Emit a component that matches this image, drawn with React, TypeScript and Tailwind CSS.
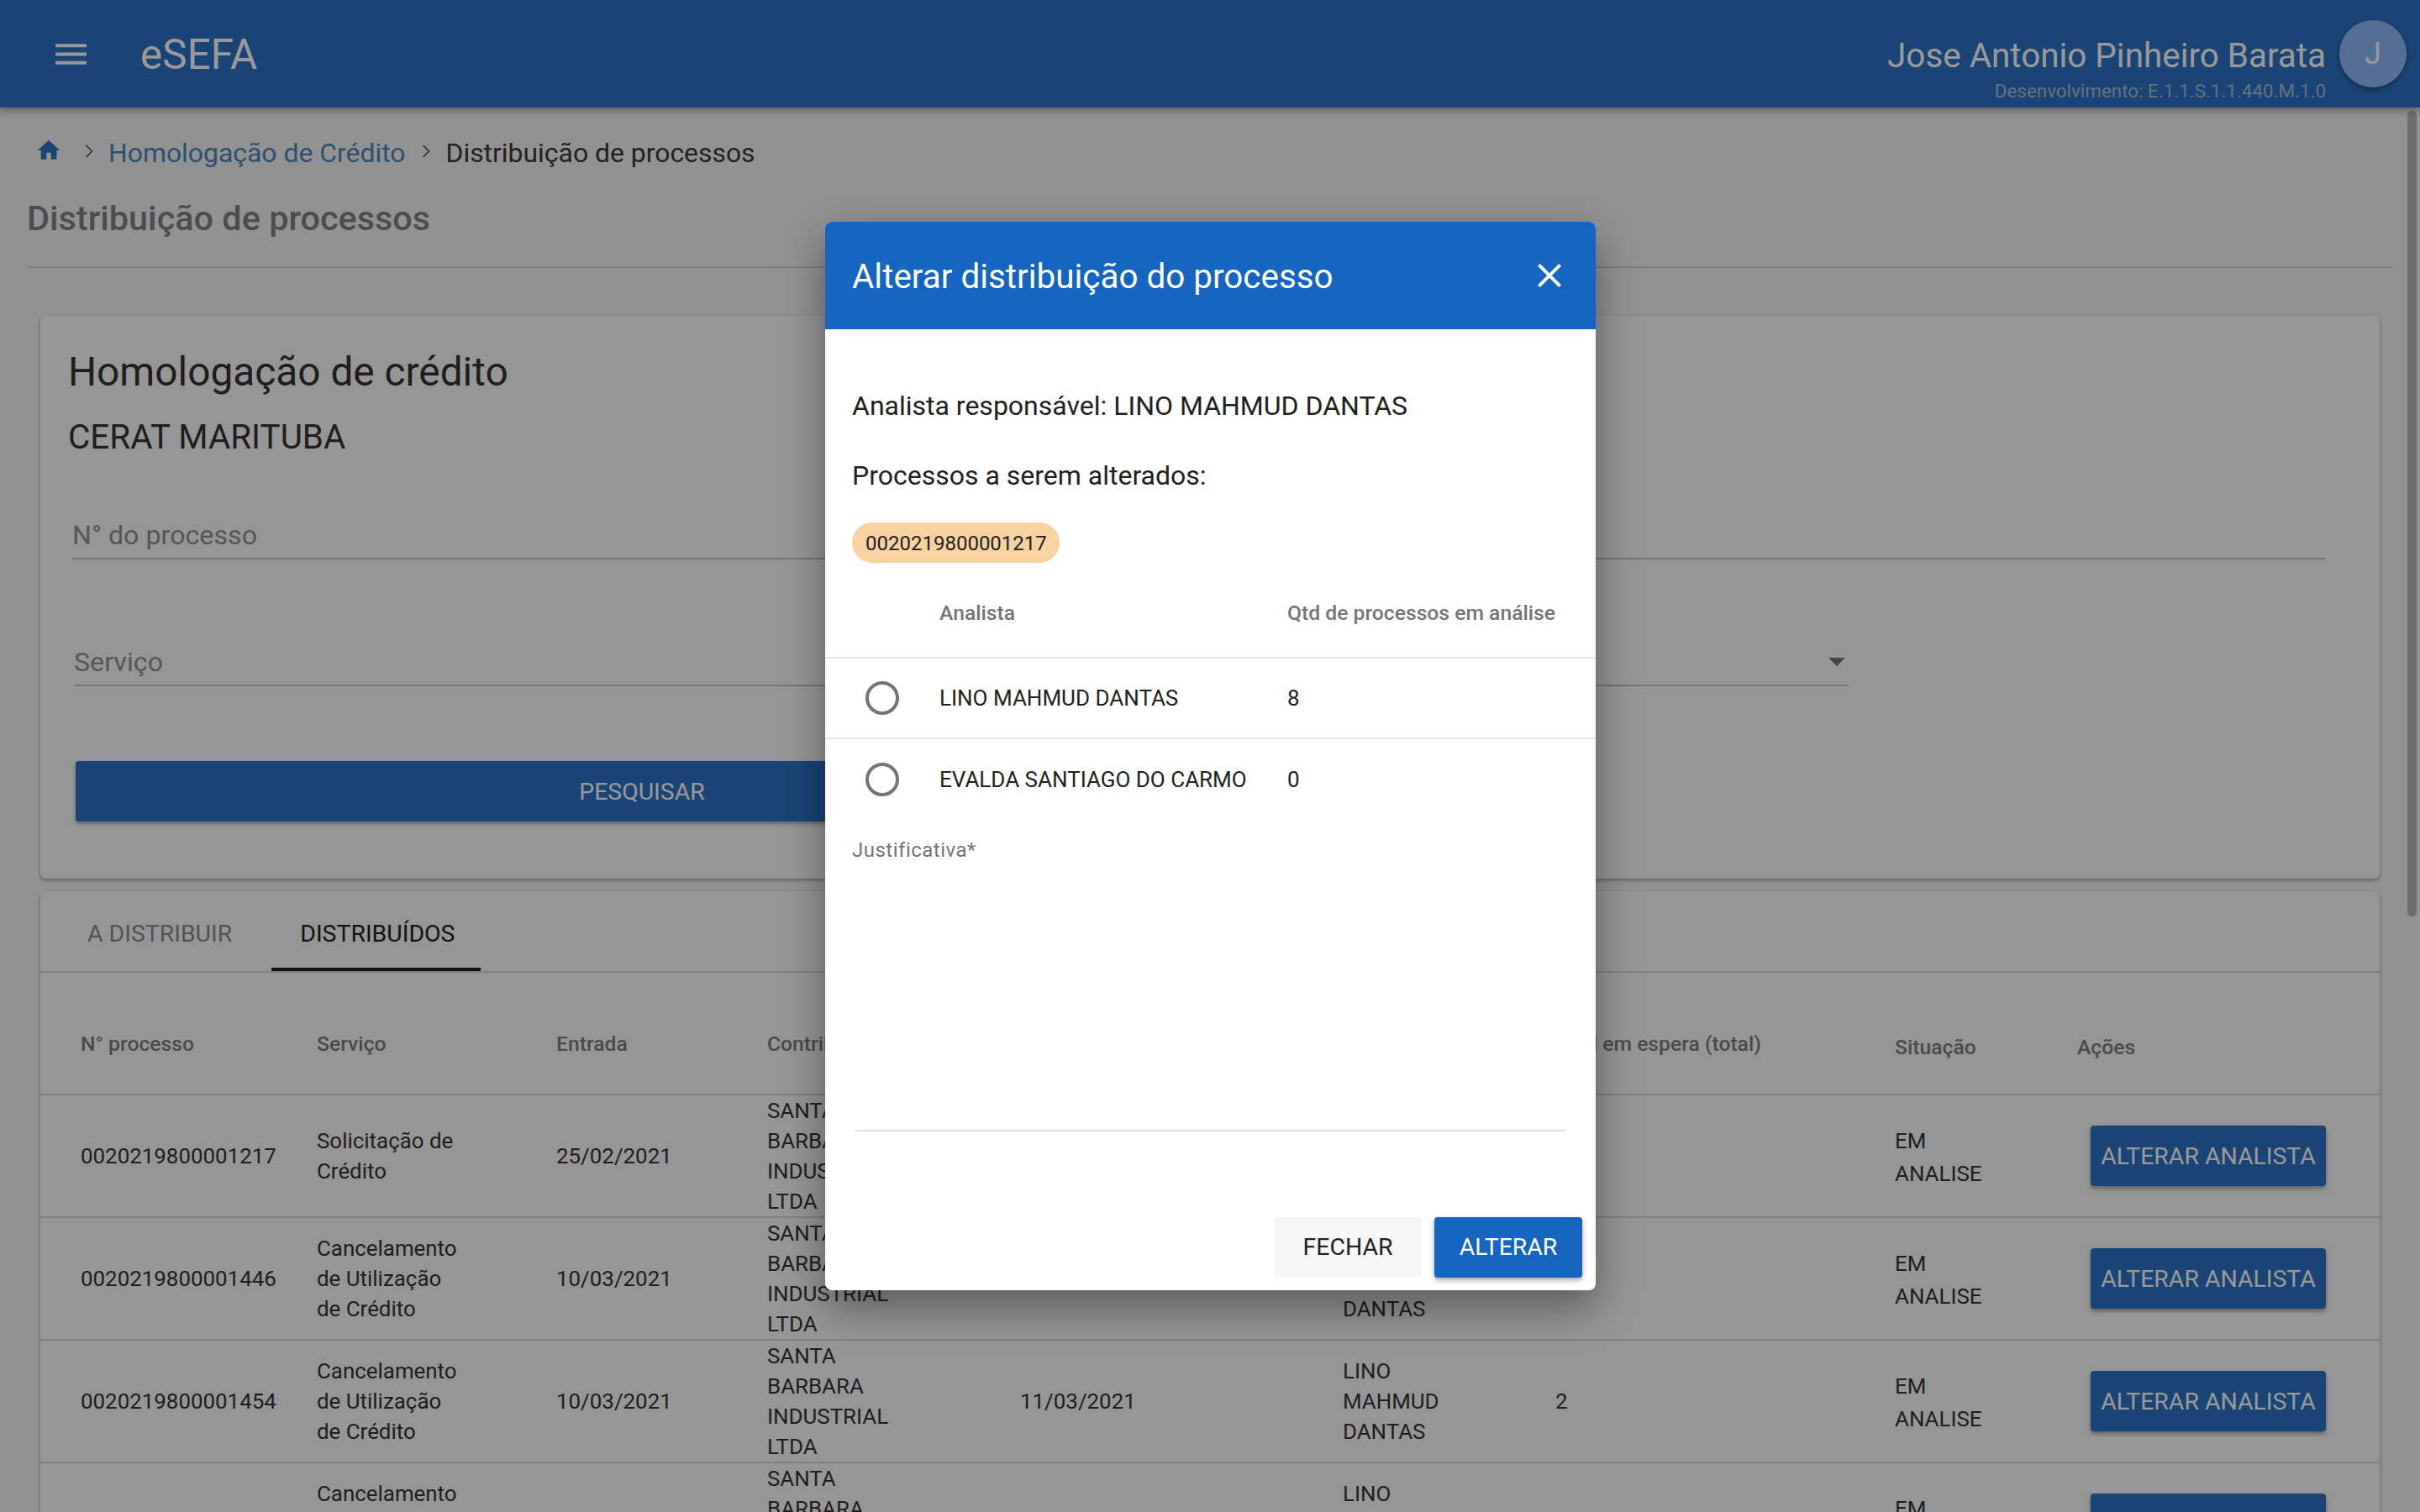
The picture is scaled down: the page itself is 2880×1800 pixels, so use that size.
import React from "react";

const rows = [
  { num: "0020219800001217", service: "Solicitação de Crédito", entrada: "25/02/2021", dist: "26/02/2021", waiting: "1" },
  { num: "0020219800001446", service: "Cancelamento de Utilização de Crédito", entrada: "10/03/2021", dist: "11/03/2021", waiting: "2" },
  { num: "0020219800001454", service: "Cancelamento de Utilização de Crédito", entrada: "10/03/2021", dist: "11/03/2021", waiting: "2" },
  { num: "0020219800001462", service: "Cancelamento de Utilização de Crédito", entrada: "10/03/2021", dist: "11/03/2021", waiting: "2" },
];

const gridCols = "grid grid-cols-[48px_281px_285px_251px_301px_384px_253px_404px_217px_1fr]";

const Chevron = () => (
  <svg viewBox="0 0 10 16" className="w-[10px] h-[16px] mb-[6px]" fill="none" stroke="#4a4a4a" strokeWidth="1.6">
    <path d="M1.5 1l7 7-7 7" />
  </svg>
);

const AnalystRow = ({ name, qty, line }: { name: string; qty: string; line?: boolean }) => (
  <div className={`grid grid-cols-[136px_414px_1fr] items-center h-[96px] text-[26px] text-[#212121] ${line ? "border-b-2 border-[#e6e6e6]" : ""}`}>
    <div className="pl-[48px]">
      <div className="w-[40px] h-[40px] rounded-full border-[4px] border-[#757575]" />
    </div>
    <div>{name}</div>
    <div>{qty}</div>
  </div>
);

export default function App() {
  return (
    <div className="relative w-[2880px] h-[1800px] overflow-hidden bg-[#f3f3f3] font-['Roboto',sans-serif]">
      <header className="relative z-10 flex items-center h-[128px] pl-[60px] pr-[16px] bg-[#2b72c4] text-white shadow-[0_4px_9px_rgba(0,0,0,0.35)]">
        <svg viewBox="0 0 24 24" className="w-[49px] h-[49px]" fill="currentColor">
          <path d="M3 18h18v-2H3v2zm0-5h18v-2H3v2zm0-7v2h18V6H3z" />
        </svg>
        <div className="ml-[58px] pt-[2px] text-[49.5px]">eSEFA</div>
        <div className="ml-auto flex flex-col items-end pt-[36px]">
          <div className="text-[40.4px] leading-[48px]">Jose Antonio Pinheiro Barata</div>
          <div className="text-[22.4px] leading-[26px] mt-[4px] text-[#a8bcd6]">Desenvolvimento: E.1.1.S.1.1.440.M.1.0</div>
        </div>
        <div className="ml-[16px] flex items-center justify-center w-[80px] h-[80px] rounded-full bg-[#8cb7fa] text-[36px] shadow-[0_3px_6px_rgba(0,0,0,0.35)]">
          J
        </div>
      </header>

      <main>
        <nav className="flex items-center h-[64px] mt-[23px] pl-[42px] text-[31.9px] leading-none">
          <svg viewBox="0 0 24 24" className="w-[32px] h-[32px] mb-[8px]" fill="#2b72c4">
            <path d="M10 20v-6h4v6h5v-8h3L12 3 2 12h3v8z" />
          </svg>
          <div className="ml-[27px]"><Chevron /></div>
          <span className="ml-[18px] text-[#4d86b8]">Homologação de Crédito</span>
          <div className="ml-[20px]"><Chevron /></div>
          <span className="ml-[18px] text-[#383838]">Distribuição de processos</span>
        </nav>

        <h1 className="mt-[15px] ml-[32px] h-[60px] flex items-center text-[41.4px] font-medium text-[#808080]">Distribuição de processos</h1>
        <div className="mt-[27px] ml-[32px] w-[2816px] h-[2px] bg-[#d0d0d0]" />

        <section className="relative mt-[57px] mx-[48px] h-[670px] rounded-[6px] bg-[#fafafa] shadow-[0_2px_4px_rgba(0,0,0,0.35)] pt-[38px]">
          <h2 className="ml-[33px] h-[60px] flex items-center text-[47.8px] text-[#333]">Homologação de crédito</h2>
          <div className="ml-[33px] mt-[22px] h-[50px] flex items-center text-[40.4px] text-[#333]">CERAT MARITUBA</div>
          <div className="mt-[71px] ml-[38px] w-[2682px] h-[49px] border-b-2 border-[#c4c4c4] text-[32.2px] leading-[40px] text-[#8f8f8f]">N° do processo</div>
          <div className="relative mt-[102px] ml-[40px] w-[2112px] h-[49px] border-b-2 border-[#c4c4c4] text-[32.2px] leading-[40px] text-[#8f8f8f]">
            Serviço
            <svg viewBox="0 0 24 24" className="absolute right-[-10px] top-[-5px] w-[48px] h-[48px]" fill="#757575">
              <path d="M7 10l5 5 5-5z" />
            </svg>
          </div>
          <button className="block mt-[89px] ml-[42px] w-[1348px] h-[72px] pt-[2px] rounded-[4px] bg-[#2b72c4] text-white text-[28.4px] shadow-[0_3px_5px_rgba(0,0,0,0.3)]">PESQUISAR</button>
        </section>

        <section className="mt-[15px] mx-[48px] rounded-[6px] bg-[#fafafa] shadow-[0_2px_4px_rgba(0,0,0,0.35)]">
          <div className="flex h-[97px] pl-[24px] gap-[15px] border-b-2 border-[#d6d6d6] text-[28.4px]">
            <div className="flex items-center px-[32px] pt-[8px] text-[#8a8a8a]">A DISTRIBUIR</div>
            <div className="flex items-center pl-[34px] pr-[31px] pt-[12px] text-[#212121] border-b-[4px] border-[#212121] h-[95px]">DISTRIBUÍDOS</div>
          </div>

          <div className={`${gridCols} items-center h-[146px] pt-[26px] border-b-2 border-[#d6d6d6] text-[24.7px] font-medium text-[#7c7c7c]`}>
            <div />
            <div>N° processo</div>
            <div>Serviço</div>
            <div>Entrada</div>
            <div>Contribuinte</div>
            <div>Distribuição</div>
            <div>Analista</div>
            <div className="ml-[11px]">Qtd em espera (total)</div>
            <div className="mt-[8px]">Situação</div>
            <div className="mt-[8px]">Ações</div>
          </div>

          {rows.map((r) => (
            <div key={r.num} className={`${gridCols} items-center h-[146px] border-b-2 border-[#d6d6d6] text-[25.9px] leading-[36px] text-[#333]`}>
              <div />
              <div>{r.num}</div>
              <div className="w-[175px]">{r.service}</div>
              <div>{r.entrada}</div>
              <div className="w-[160px]">SANTA BARBARA INDUSTRIAL LTDA</div>
              <div>{r.dist}</div>
              <div className="w-[130px]">LINO MAHMUD DANTAS</div>
              <div>{r.waiting}</div>
              <div className="w-[120px] mt-[4px] leading-[39px]">EM ANALISE</div>
              <div className="pl-[16px]">
                <button className="w-[280px] h-[72px] pt-[1px] rounded-[4px] bg-[#2b72c4] text-white text-[28.4px] shadow-[0_3px_5px_rgba(0,0,0,0.35)]">ALTERAR ANALISTA</button>
              </div>
            </div>
          ))}
        </section>
      </main>

      <div className="absolute right-[4px] top-[132px] w-[11px] h-[959px] rounded-full bg-[#b8b8b8]" />

      <div className="absolute inset-0 z-20 flex items-center justify-center bg-black/40">
        <div className="w-[917px] ml-[1px] h-[1272px] rounded-[8px] overflow-hidden bg-white shadow-[0_20px_50px_rgba(0,0,0,0.4)]">
          <div className="flex items-center justify-between h-[128px] pl-[32px] pr-[31px] bg-[#1565c0] text-white">
            <div className="pt-[5px] text-[40.4px]">Alterar distribuição do processo</div>
            <svg viewBox="0 0 24 24" className="w-[48px] h-[48px]" fill="currentColor">
              <path d="M19 6.41L17.59 5 12 10.59 6.41 5 5 6.41 10.59 12 5 17.59 6.41 19 12 13.41 17.59 19 19 17.59 13.41 12z" />
            </svg>
          </div>

          <div className="pt-[71px] pl-[32px] h-[111px] text-[32px] leading-[40px] text-[#212121]">Analista responsável: LINO MAHMUD DANTAS</div>
          <div className="mt-[43px] pl-[32px] text-[32px] leading-[40px] text-[#212121]">Processos a serem alterados:</div>
          <div className="mt-[36px] ml-[32px] flex items-center w-[247px] h-[48px] pt-[2px] rounded-full bg-[#f8d2a0] pl-[16px] text-[24px] text-[#212121]">0020219800001217</div>

          <div className="grid grid-cols-[136px_414px_1fr] items-center h-[114px] pt-[7px] border-b-2 border-[#e6e6e6] text-[24.7px] font-medium text-[#757575]">
            <div />
            <div>Analista</div>
            <div>Qtd de processos em análise</div>
          </div>
          <AnalystRow name="LINO MAHMUD DANTAS" qty="8" line />
          <AnalystRow name="EVALDA SANTIAGO DO CARMO" qty="0" />

          <div className="mt-[21px] ml-[32px] h-[30px] text-[24px] leading-[30px] tracking-[0.5px] text-[#757575]">Justificativa*</div>
          <div className="ml-[35px] w-[846px] h-[320px] border-b-2 border-[#e0e0e0]" />

          <div className="flex justify-end gap-[15px] mt-[102px] pr-[16px]">
            <button className="w-[176px] h-[72px] rounded-[4px] bg-[#f6f6f6] text-[28.4px] text-[#212121]">FECHAR</button>
            <button className="w-[176px] h-[72px] rounded-[4px] bg-[#1565c0] text-[28.4px] text-white shadow-[0_3px_6px_rgba(0,0,0,0.35)]">ALTERAR</button>
          </div>
        </div>
      </div>
    </div>
  );
}
